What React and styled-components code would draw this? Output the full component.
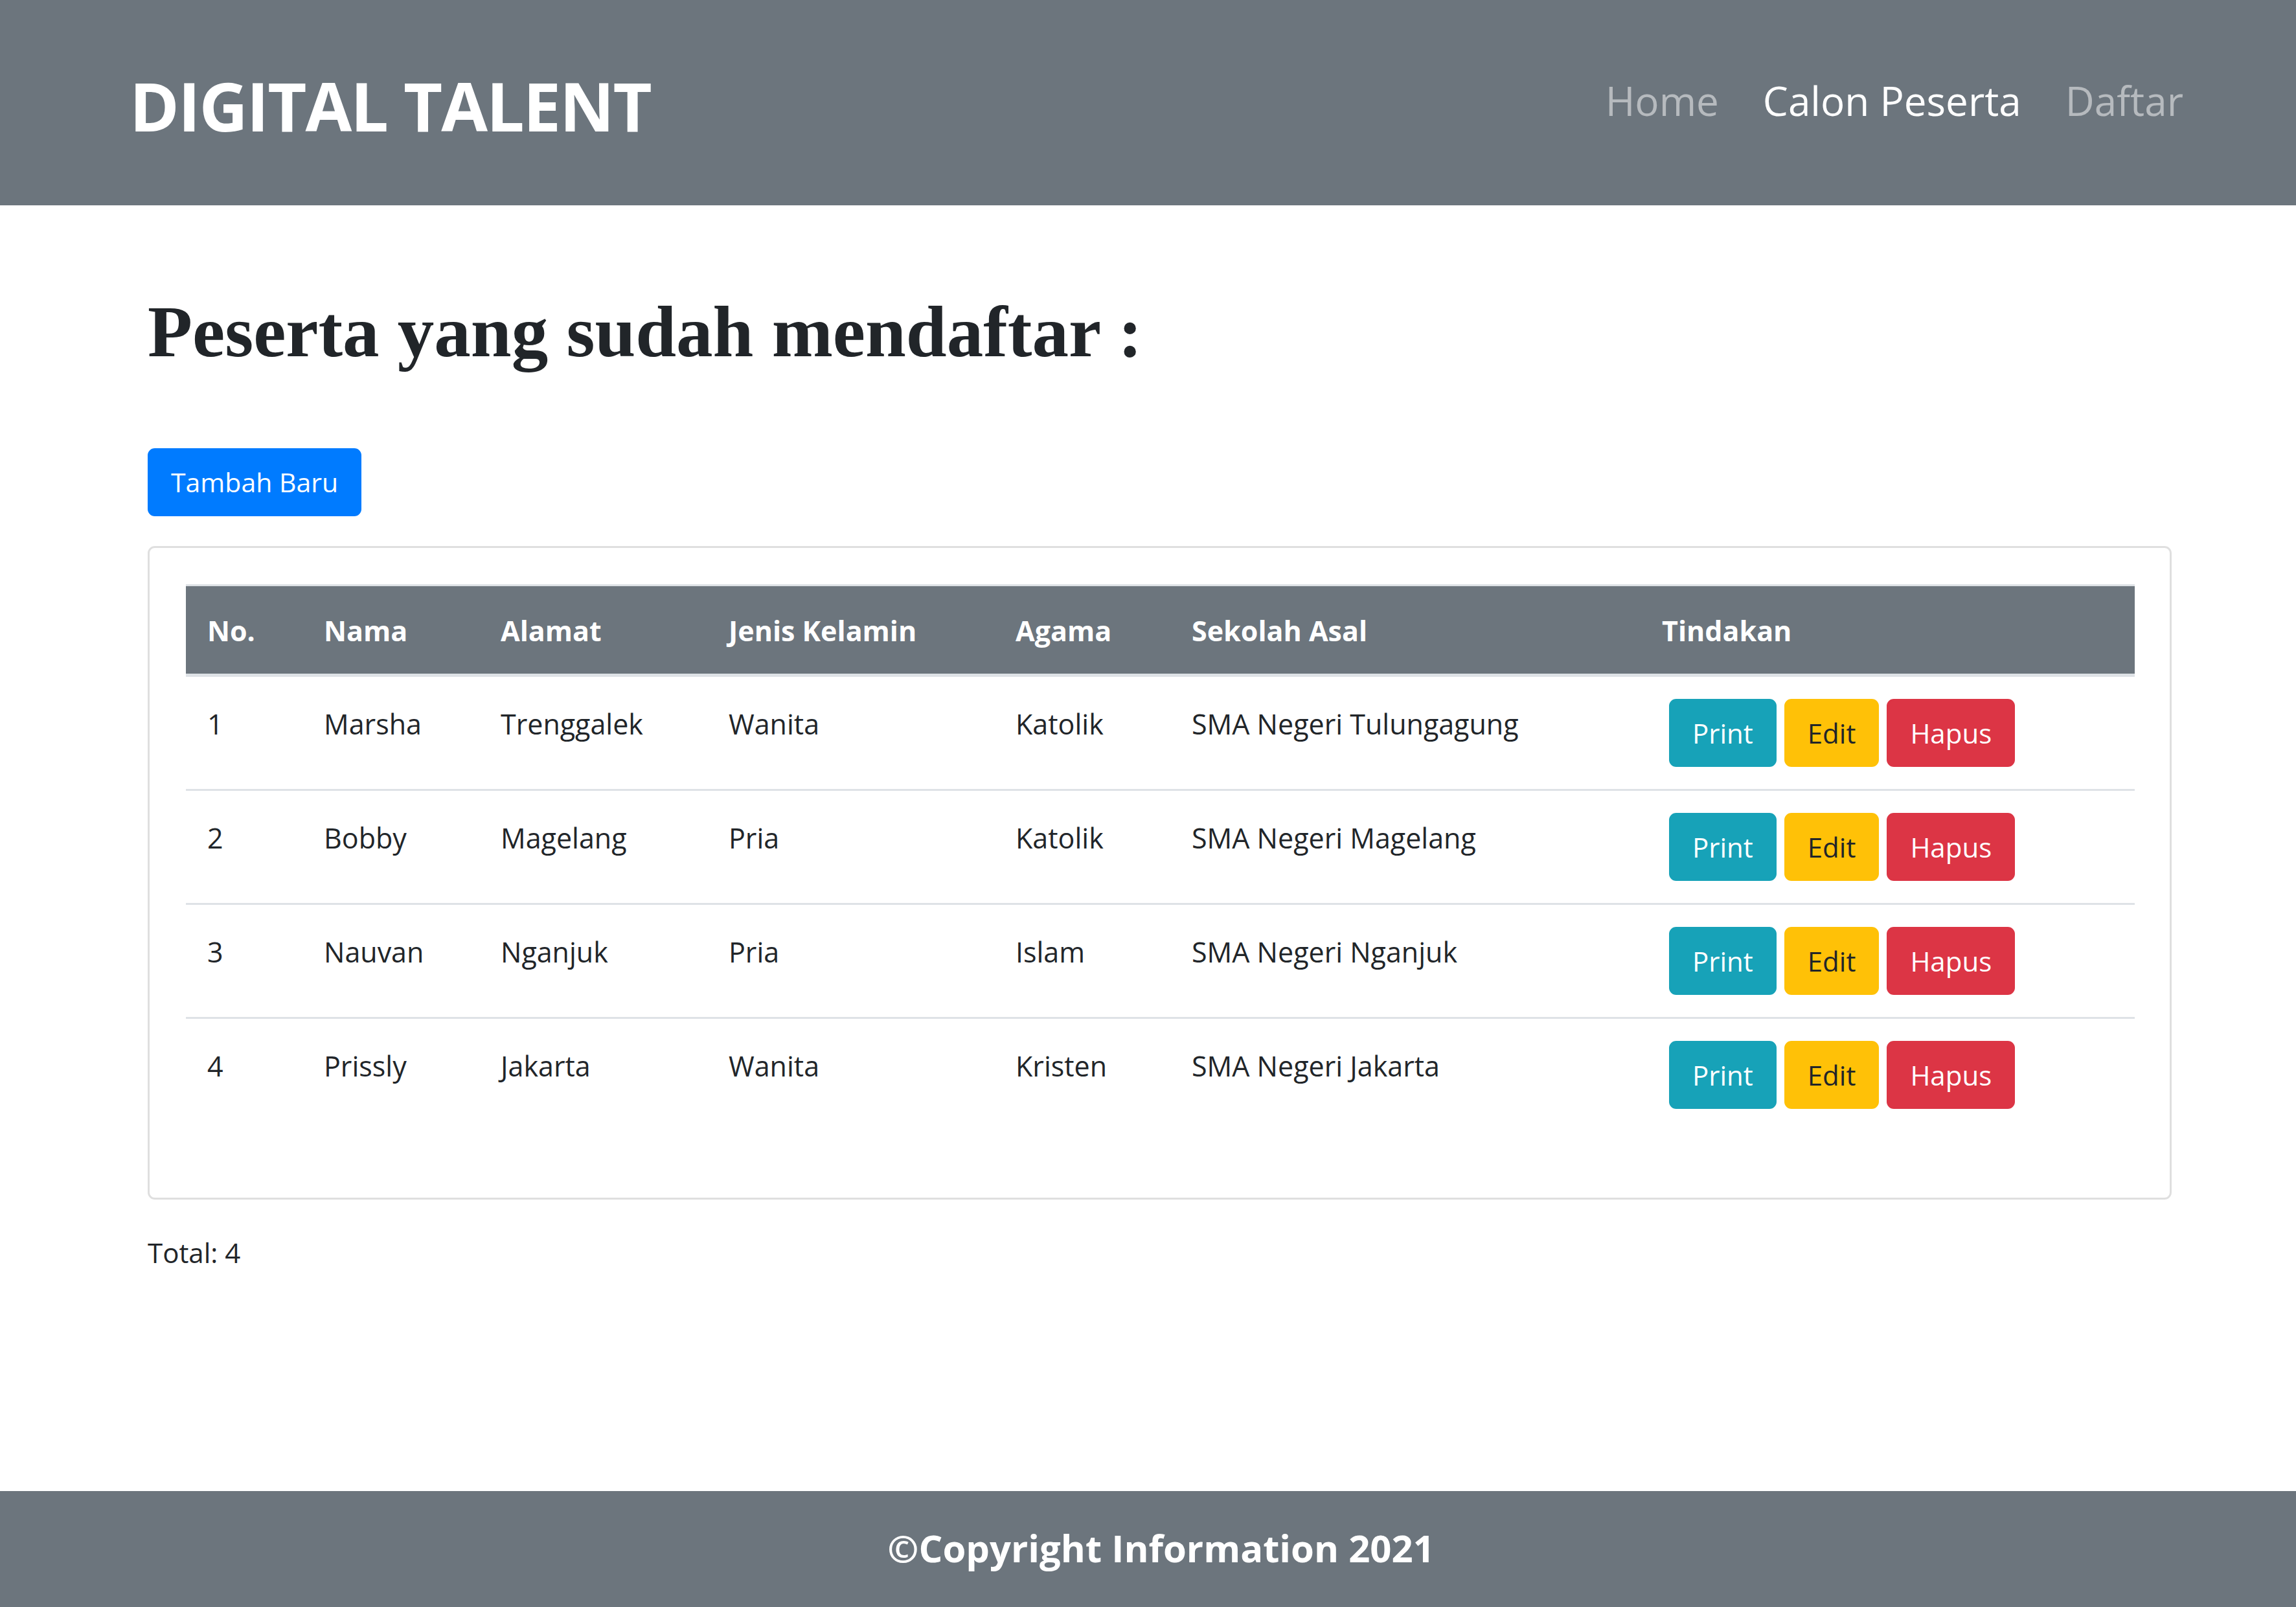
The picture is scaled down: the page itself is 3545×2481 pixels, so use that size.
import React from 'react';
import styled, { createGlobalStyle } from 'styled-components';

const GlobalStyle = createGlobalStyle`
  html, body {
    margin: 0;
    padding: 0;
    background: #ffffff;
  }
  body {
    font-family: "Open Sans", "Noto Sans", Arial, sans-serif;
    color: #212529;
  }
`;

const Page = styled.div`
  min-height: 100vh;
  display: flex;
  flex-direction: column;
`;

const Header = styled.header`
  height: 317px;
  background: #6c757d;
  display: flex;
  align-items: center;
  justify-content: space-between;
  padding: 0 174px 0 200px;
  box-sizing: border-box;
`;

const Brand = styled.div`
  font-family: "Open Sans", sans-serif;
  font-weight: 700;
  font-size: 104px;
  color: #ffffff;
  padding-top: 8px;
  letter-spacing: -2px;
`;

const Nav = styled.nav`
  display: flex;
  gap: 68px;
  padding-bottom: 8px;
`;

const NavLink = styled.a`
  font-size: 62px;
  color: ${props => props.active ? '#ffffff' : 'rgba(255,255,255,0.5)'};
  text-decoration: none;
  cursor: pointer;
`;

const Main = styled.main`
  padding: 128px 192px 0 228px;
  flex: 1;
`;

const Title = styled.h1`
  font-family: "Liberation Serif", "Times New Roman", serif;
  font-weight: 700;
  font-size: 113px;
  line-height: 134px;
  margin: 0;
`;

const Button = styled.button`
  display: inline-block;
  font-family: "Open Sans", sans-serif;
  font-size: 42px;
  line-height: 67px;
  padding: 16px 33px;
  border: 3px solid ${props => props.bg};
  border-radius: 11px;
  background: ${props => props.bg};
  color: ${props => props.dark ? '#212529' : '#ffffff'};
  cursor: pointer;
`;

const AddButton = styled(Button)`
  margin-top: 113px;
  font-size: 41px;
`;

const Card = styled.div`
  margin-top: 46px;
  border: 3px solid rgba(0,0,0,0.125);
  border-radius: 11px;
  padding: 56px 55px 58px 56px;
`;

const Table = styled.table`
  width: 100%;
  table-layout: fixed;
  border-collapse: collapse;
  margin-bottom: 45px;
  font-size: 43px;
  line-height: 67px;
`;

const Th = styled.th`
  box-sizing: border-box;
  width: ${props => props.w}px;
  text-align: left;
  font-weight: 700;
  color: #ffffff;
  background: #6c757d;
  padding: 35px 33px 33px;
  border-top: 3px solid #dee2e6;
  border-bottom: 5px solid #dee2e6;
`;

const Td = styled.td`
  vertical-align: top;
  padding: 39px 33px 34px;
  border-top: 3px solid #dee2e6;
  white-space: nowrap;
`;

const ActionTd = styled(Td)`
  padding: 34px 33px 34px 44px;
`;

const Actions = styled.div`
  display: flex;
  gap: 12px;
`;

const Total = styled.p`
  margin: 48px 0 0;
  font-size: 42px;
  line-height: 67px;
`;

const Footer = styled.footer`
  margin-top: auto;
  height: 179px;
  background: #6c757d;
  display: flex;
  align-items: center;
  justify-content: center;
  padding: 0 0 4px 40px;
  box-sizing: border-box;
  color: #ffffff;
  font-weight: 700;
  font-size: 58px;
`;

const columns = [
  { label: 'No.', w: 180 },
  { label: 'Nama', w: 273 },
  { label: 'Alamat', w: 352 },
  { label: 'Jenis Kelamin', w: 443 },
  { label: 'Agama', w: 272 },
  { label: 'Sekolah Asal', w: 726 },
  { label: 'Tindakan', w: 763 },
];

const peserta = [
  { no: 1, nama: 'Marsha', alamat: 'Trenggalek', jk: 'Wanita', agama: 'Katolik', sekolah: 'SMA Negeri Tulungagung' },
  { no: 2, nama: 'Bobby', alamat: 'Magelang', jk: 'Pria', agama: 'Katolik', sekolah: 'SMA Negeri Magelang' },
  { no: 3, nama: 'Nauvan', alamat: 'Nganjuk', jk: 'Pria', agama: 'Islam', sekolah: 'SMA Negeri Nganjuk' },
  { no: 4, nama: 'Prissly', alamat: 'Jakarta', jk: 'Wanita', agama: 'Kristen', sekolah: 'SMA Negeri Jakarta' },
];

export default function App() {
  return (
    <Page>
      <GlobalStyle />
      <Header>
        <Brand>DIGITAL TALENT</Brand>
        <Nav>
          <NavLink>Home</NavLink>
          <NavLink active>Calon Peserta</NavLink>
          <NavLink>Daftar</NavLink>
        </Nav>
      </Header>
      <Main>
        <Title>Peserta yang sudah mendaftar :</Title>
        <AddButton bg="#007bff">Tambah Baru</AddButton>
        <Card>
          <Table>
            <thead>
              <tr>
                {columns.map(c => (
                  <Th key={c.label} w={c.w}>{c.label}</Th>
                ))}
              </tr>
            </thead>
            <tbody>
              {peserta.map(p => (
                <tr key={p.no}>
                  <Td>{p.no}</Td>
                  <Td>{p.nama}</Td>
                  <Td>{p.alamat}</Td>
                  <Td>{p.jk}</Td>
                  <Td>{p.agama}</Td>
                  <Td>{p.sekolah}</Td>
                  <ActionTd>
                    <Actions>
                      <Button bg="#17a2b8">Print</Button>
                      <Button bg="#ffc107" dark>Edit</Button>
                      <Button bg="#dc3545">Hapus</Button>
                    </Actions>
                  </ActionTd>
                </tr>
              ))}
            </tbody>
          </Table>
        </Card>
        <Total>Total: 4</Total>
      </Main>
      <Footer>©Copyright Information 2021</Footer>
    </Page>
  );
}
